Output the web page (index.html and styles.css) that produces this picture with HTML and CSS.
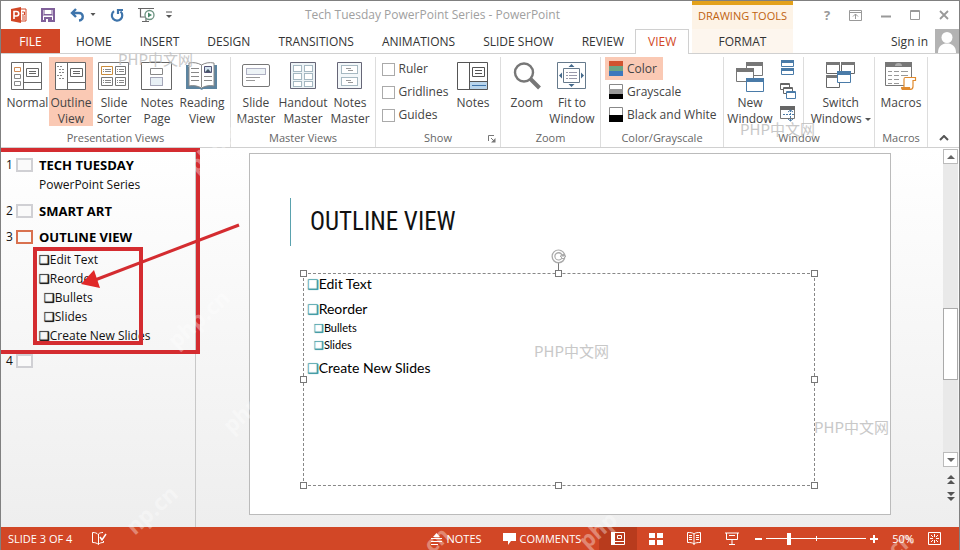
FILE: index.html
```html
<!DOCTYPE html>
<html lang="en">
<head>
<meta charset="utf-8">
<title>Tech Tuesday PowerPoint Series - PowerPoint</title>
<link rel="stylesheet" href="styles.css">
</head>
<body>
<div class="app">
  <header class="titlebar">
    <div class="quick">
      <svg class="logo" width="16" height="16" viewBox="0 0 16 16"><path d="M9 2h6v12H9z" fill="#fff" stroke="#d24726"/><path d="M0 2l10-2v16L0 14z" fill="#d24726"/><path d="M3 12V4.500h2.500a2 2 0 0 1 0 4.500H3" fill="none" stroke="#fff" stroke-width="1.600"/><path d="M11 5h2.500v3H11M11 10h3M11 12h3" fill="none" stroke="#d24726"/></svg>
      <button class="plain save" aria-label="Save"><svg width="14" height="14" viewBox="0 0 14 14"><path d="M1 1h12v12H1z" fill="#fff" stroke="#80609a" stroke-width="2"/><path d="M3 1v5.500h8V1M1 7h12" fill="none" stroke="#80609a"/><path d="M3 9h8v5H3z" fill="#80609a"/><path d="M5 11h2v3H5z" fill="#fff"/></svg></button>
      <button class="plain undo" aria-label="Undo"><svg width="26" height="14" viewBox="0 0 26 14"><path d="M2 5h7c5 0 5 7 0 7.500M6 1L2 5l4 4" fill="none" stroke="#3e74ab" stroke-width="2.400"/><path d="M20.500 5h5L23 8z" fill="#555"/></svg></button>
      <button class="plain redo" aria-label="Repeat"><svg width="14" height="14" viewBox="0 0 14 14"><path d="M4 3.200A5.200 5.200 0 1 0 10.500 3.500M8 6V2h5" fill="none" stroke="#3e74ab" stroke-width="2.200"/></svg></button>
      <button class="plain start" aria-label="Start from beginning"><svg width="18" height="16" viewBox="0 0 18 16"><path d="M0 1.500h16M2.500 2v8H7M8 10v4M4 14.500h7" fill="none" stroke="#666" stroke-width="1.200"/><circle cx="11.500" cy="8" r="4.500" fill="#fff" stroke="#6d9482" stroke-width="1.300"/><path d="M10 5.500v5l4-2.500z" fill="#4a8a6b"/></svg></button>
      <button class="plain more" aria-label="Customize"><svg width="6" height="8" viewBox="0 0 6 8"><path d="M0 1h6" stroke="#555"/><path d="M0 4h6L3 7z" fill="#555"/></svg></button>
    </div>
    <h1 class="doc">Tech Tuesday PowerPoint Series - PowerPoint</h1>
    <div class="tools">DRAWING TOOLS</div>
    <div class="winbtns">
      <button class="plain help" aria-label="Help">?</button>
      <button class="plain" aria-label="Ribbon display"><svg width="13" height="11" viewBox="0 0 13 11"><path d="M.5.5h12v10H.5zM.5 2.500h12M6.500 9V4M4 6.500L6.500 4 9 6.500" fill="none" stroke="#999"/></svg></button>
      <button class="plain" aria-label="Minimize"><svg width="10" height="10" viewBox="0 0 10 10"><path d="M0 6.500h10" stroke="#999" stroke-width="2"/></svg></button>
      <button class="plain" aria-label="Maximize"><svg width="10" height="10" viewBox="0 0 10 10"><path d="M.5.5h9v9h-9zM0 1.500h10" fill="none" stroke="#999"/></svg></button>
      <button class="plain" aria-label="Close"><svg width="10" height="10" viewBox="0 0 10 10"><path d="M1 1l8 8M9 1L1 9" stroke="#999" stroke-width="1.800"/></svg></button>
    </div>
  </header>

  <nav class="tabs">
    <a class="tab file" href="#">FILE</a>
    <a class="tab" href="#">HOME</a>
    <a class="tab" href="#">INSERT</a>
    <a class="tab" href="#">DESIGN</a>
    <a class="tab" href="#">TRANSITIONS</a>
    <a class="tab" href="#">ANIMATIONS</a>
    <a class="tab" href="#">SLIDE SHOW</a>
    <a class="tab" href="#">REVIEW</a>
    <a class="tab active" href="#">VIEW</a>
    <a class="tab format" href="#">FORMAT</a>
    <a class="signin" href="#">Sign in</a>
    <svg class="avatar" width="24" height="24" viewBox="0 0 24 24"><path d="M0 0h24v24H0z" fill="#b3b3b3"/><circle cx="12" cy="8.500" r="5.500" fill="#fff"/><path d="M3 24c0-7 4-9.500 9-9.500s9 2.500 9 9.500z" fill="#fff"/></svg>
  </nav>

  <section class="ribbon">
    <div class="group">
      <div class="row">
        <button class="big"><svg width="32" height="28" viewBox="0 0 32 28"><path d="M.5.5h30v27H.5zM12.500.5v27M12.500 20.500h18" fill="#fff" stroke="#666"/><path d="M15.500 6.500h12v8h-12zM18 9.500h7M18 11.500h7" fill="none" stroke="#666"/><path d="M3.500 5.500h6v4h-6z" fill="none" stroke="#cf8a55"/><path d="M3.500 12.500h6v4h-6zM3.500 19.500h6v4h-6z" fill="none" stroke="#888"/></svg>Normal</button>
        <button class="big on"><svg width="32" height="28" viewBox="0 0 32 28"><path d="M.5.5h30v27H.5zM12.500.5v27M12.500 20.500h18" fill="#fff" stroke="#666"/><path d="M15.500 6.500h12v8h-12zM18 9.500h7M18 11.500h7" fill="none" stroke="#666"/><path d="M2 4.500h6M4 7.500h6M4 10.500h6M2 13.500h6M4 16.500h6" stroke="#888" stroke-dasharray="2 1"/></svg>Outline<br>View</button>
        <button class="big"><svg width="32" height="28" viewBox="0 0 32 28"><path d="M.5.5h30v27H.5z" fill="#fff" stroke="#777"/><path d="M3.500 4.500h11v8h-11z" fill="none" stroke="#c98c3c"/><path d="M17.500 4.500h10v8h-10zM3.500 15.500h11v8h-11zM17.500 15.500h10v8h-10z" fill="none" stroke="#777"/><path d="M5 7.500h8M5 9.500h8M19 7.500h7M19 9.500h7M5 18.500h8M5 20.500h8M19 18.500h7M19 20.500h7" stroke="#888" stroke-dasharray="1 1 5 0"/></svg>Slide<br>Sorter</button>
        <button class="big"><svg width="32" height="28" viewBox="0 0 32 28"><path d="M.5.5h30v27H.5z" fill="#fff" stroke="#666"/><path d="M9.500 6.500h12v6h-12z" fill="none" stroke="#888"/><path d="M9.500 15.500h12v8h-12z" fill="#e8f0f5" stroke="#557" stroke-dasharray="1 1"/></svg>Notes<br>Page</button>
        <button class="big"><svg width="32" height="28" viewBox="0 0 32 28"><path d="M0 3h31v24H17l-1 1-2-1H0z" fill="#5c84a0"/><path d="M3 1c5-1 9 0 12.500 2C19 1 23 0 28 1v23c-5-1-9 0-12.500 2C12 24 8 23 3 24z" fill="#fff" stroke="#888"/><path d="M15.500 3v22M5 6.500h8M5 10.500h8M5 14.500h8M5 18.500h8M18 14.500h8M18 18.500h8" stroke="#888" fill="none"/><path d="M18.500 4.500h7v6h-7z" fill="#d5e5f0" stroke="#557"/><path d="M19 10l3-3 3 3z" fill="#456"/></svg>Reading<br>View</button>
      </div>
      <h2>Presentation Views</h2>
    </div>
    <div class="group">
      <div class="row">
        <button class="big"><svg width="28" height="28" viewBox="0 0 28 28"><rect x=".5" y="2.500" width="27" height="22" rx="1.500" fill="#fff" stroke="#777"/><path d="M4.500 6.500h19v6h-19z" fill="#edf3f6" stroke="#668" stroke-dasharray="1 1"/><path d="M4 15.500h14M4 18.500h9" stroke="#999"/></svg>Slide<br>Master</button>
        <button class="big"><svg width="28" height="28" viewBox="0 0 28 28"><path d="M1.500.5h25v26h-25z" fill="#edf3f6" stroke="#667"/><path d="M4.500 3.500h8v6h-8zM15.500 3.500h8v6h-8zM4.500 11.500h8v6h-8zM15.500 11.500h8v6h-8zM4.500 19.500h8v5h-8zM15.500 19.500h8v5h-8z" fill="#fff" stroke="#578" stroke-dasharray="1 1"/></svg>Handout<br>Master</button>
        <button class="big"><svg width="28" height="28" viewBox="0 0 28 28"><path d="M1.500.5h24v26h-24z" fill="#f3f7f9" stroke="#667"/><path d="M5.500 3.500h16v8h-16zM5.500 15.500h16v8h-16z" fill="#fff" stroke="#578" stroke-dasharray="1 1"/><path d="M10 6.500h5M12 8.500h5M10 18.500h5M12 20.500h5" stroke="#999"/></svg>Notes<br>Master</button>
      </div>
      <h2>Master Views</h2>
    </div>
    <div class="group">
      <div class="row">
        <div class="checks">
          <label><input type="checkbox">Ruler</label>
          <label><input type="checkbox">Gridlines</label>
          <label><input type="checkbox">Guides</label>
        </div>
        <button class="big"><svg width="32" height="28" viewBox="0 0 32 28"><path d="M.5.5h30v27H.5z" fill="#fff" stroke="#555"/><path d="M13 19h17v8H13z" fill="#b9d5ec"/><path d="M12.500.5v27M12.500 19.500h18M15.500 5.500h12v9h-12zM18 8.500h7M18 11.500h7" fill="none" stroke="#555"/><path d="M15 23.500h14" stroke="#3e74ab"/></svg>Notes</button>
      </div>
      <h2>Show</h2>
      <button class="plain launcher" aria-label="Grid settings"><svg width="8" height="8" viewBox="0 0 8 8"><path d="M.5 6V.5H6M3 3l3 3" fill="none" stroke="#777"/><path d="M7.500 3v4.500H3z" fill="#777"/></svg></button>
    </div>
    <div class="group">
      <div class="row">
        <button class="big"><svg width="28" height="28" viewBox="0 0 28 28"><circle cx="11" cy="10.500" r="9" fill="#fff" stroke="#777" stroke-width="2.400"/><path d="M17.500 17l9 9" stroke="#777" stroke-width="4"/></svg>Zoom</button>
        <button class="big"><svg width="30" height="28" viewBox="0 0 30 28"><path d="M.5.5h28v26H.5z" fill="#fff" stroke="#667a8c"/><path d="M6.500 6.500h16v14h-16z" fill="none" stroke="#667a8c"/><path d="M9 10.500h2M12 10.500h8M9 13.500h2M12 13.500h8M9 16.500h2M12 16.500h8" stroke="#99a"/><path d="M14.500 2l3 3h-6zM14.500 25l3-3h-6zM2 13.500l3-3v6zM27 13.500l-3-3v6z" fill="#456a8c"/></svg>Fit to<br>Window</button>
      </div>
      <h2>Zoom</h2>
    </div>
    <div class="group">
      <div class="modes">
        <button class="mode on"><svg width="14" height="15" viewBox="0 0 14 15"><path d="M0 0h14v5H0z" fill="#d0532f"/><path d="M0 5h14v5H0z" fill="#6aa584"/><path d="M0 10h14v5H0z" fill="#3c78bd"/></svg>Color</button>
        <button class="mode"><svg width="14" height="15" viewBox="0 0 14 15"><path d="M.5.5h13v14H.5z" fill="#fff" stroke="#888"/><path d="M0 5h14v5H0z" fill="#999"/><path d="M0 10h14v5H0z" fill="#000"/></svg>Grayscale</button>
        <button class="mode"><svg width="14" height="15" viewBox="0 0 14 15"><path d="M.5.5h13v14H.5z" fill="#fff" stroke="#888"/><path d="M0 8h14v7H0z" fill="#000"/></svg>Black and White</button>
      </div>
      <h2>Color/Grayscale</h2>
    </div>
    <div class="group">
      <div class="row">
        <button class="big"><svg width="28" height="32" viewBox="0 0 28 32"><path d="M10.500 1.500h16v12h-16z" fill="#fff" stroke="#777"/><path d="M10 0h17v4H10z" fill="#777"/><path d="M.5 7.500h17v12H.5z" fill="#fff" stroke="#777"/><path d="M0 6h18v4H0z" fill="#777"/><path d="M10.500 17.500h17v12h-17z" fill="#fff" stroke="#4a7ba8"/><path d="M10 16h18v4H10z" fill="#4a7ba8"/></svg>New<br>Window</button>
        <div class="stack">
          <button class="plain" aria-label="Arrange all"><svg width="16" height="16" viewBox="0 0 16 16"><path d="M1.500 1.500h12v5h-12zM1.500 8.500h12v6h-12z" fill="#fff" stroke="#4a7ba8"/><path d="M1 0h13v3H1zM1 8h13v3H1z" fill="#4a7ba8"/></svg></button>
          <button class="plain" aria-label="Cascade"><svg width="16" height="16" viewBox="0 0 16 16"><path d="M.5.5h9v6h-9zM0 1.500h10" fill="#fff" stroke="#666"/><path d="M3.500 4.500h9v6h-9zM3 5.500h10" fill="#fff" stroke="#666"/><path d="M6.500 8.500h9v7h-9zM6 9.500h10" fill="#fff" stroke="#4a7ba8"/></svg></button>
          <button class="plain" aria-label="Move split"><svg width="16" height="16" viewBox="0 0 16 16"><path d="M.5 1.500h14v11H.5z" fill="#fff" stroke="#777"/><path d="M0 0h15v4H0z" fill="#666"/><path d="M3 8.500h12M10.500 4v11" stroke="#4a7ba8" stroke-dasharray="2 1"/><path d="M8 6l2.500-2L13 6M8 13l2.500 2 2.500-2" fill="none" stroke="#4a7ba8"/></svg></button>
        </div>
        <button class="big switch"><svg width="30" height="28" viewBox="0 0 30 28"><path d="M.5 1.500h13v10H.5zM15.500 1.500h13v10h-13zM.5 14.500h13v11H.5z" fill="#fff" stroke="#666"/><path d="M0 0h14v3H0zM15 0h14v3H15zM0 13h14v3H0z" fill="#777"/><path d="M11.500 10.500h13v10h-13z" fill="#fff" stroke="#4a7ba8"/><path d="M11 9h14v4H11z" fill="#4a7ba8"/></svg>Switch<br><span>Windows<i class="caret"></i></span></button>
      </div>
      <h2>Window</h2>
    </div>
    <div class="group">
      <div class="row">
        <button class="big"><svg width="32" height="29" viewBox="0 0 32 29"><path d="M.5.5h26v23H.5z" fill="#fff" stroke="#777"/><path d="M0 0h27v5H0z" fill="#777"/><path d="M10 4a3.500 3 0 0 1 7 0z" fill="#aaa"/><path d="M3 9.500h4M9 9.500h5M16 9.500h7M3 13.500h4M9 13.500h5M16 13.500h7M3 17.500h4M9 17.500h5M3 21.500h4M9 21.500h5" stroke="#999"/><path d="M20 15.500h10.500v3H28v6c0 2-1 3-3 3h-8c2 0 2-2 2-3v-7c0-1 0-2 1-2z" fill="#fff" stroke="#e08a2e" stroke-width="1.200"/><path d="M16 25h9c0 2 1 3 2 3H18c-2 0-2-2-2-3z" fill="#e08a2e"/></svg>Macros</button>
      </div>
      <h2>Macros</h2>
    </div>
    <button class="plain collapse" aria-label="Collapse ribbon"><svg width="10" height="6" viewBox="0 0 10 6"><path d="M1 5l4-4 4 4" fill="none" stroke="#555" stroke-width="2"/></svg></button>
  </section>

  <main class="work">
    <ol class="outline">
      <li><b class="num">1</b><i class="thumb"></i><div><h3>TECH TUESDAY</h3><p>PowerPoint Series</p></div></li>
      <li><b class="num">2</b><i class="thumb"></i><div><h3>SMART ART</h3></div></li>
      <li class="current"><b class="num">3</b><i class="thumb"></i><div><h3>OUTLINE VIEW</h3>
        <ul><li>Edit Text</li><li>Reorder</li><li class="sub">Bullets</li><li class="sub">Slides</li><li>Create New Slides</li></ul></div></li>
      <li><b class="num">4</b><i class="thumb"></i><div><h3></h3></div></li>
    </ol>
    <div class="stage">
      <article class="slide">
        <h2 class="slidetitle">OUTLINE VIEW</h2>
        <div class="textbox">
          <ul><li>Edit Text</li><li>Reorder</li><li class="sub">Bullets</li><li class="sub">Slides</li><li>Create New Slides</li></ul>
          <svg class="rotate" width="16" height="25" viewBox="0 0 16 25"><path d="M7.500 14v11" stroke="#777"/><circle cx="7.500" cy="7.500" r="5" fill="none" stroke="#aaa" stroke-width="4"/><path d="M12 9.500A5 5 0 1 1 12 5" fill="none" stroke="#fff" stroke-width="1.500"/><path d="M9 7h6l-3 3z" fill="#fff" stroke="#aaa"/></svg>
          <i class="handle t l"></i><i class="handle t c"></i><i class="handle t r"></i>
          <i class="handle m l"></i><i class="handle m r"></i>
          <i class="handle b l"></i><i class="handle b c"></i><i class="handle b r"></i>
        </div>
      </article>
    </div>
    <div class="scroll">
      <button class="arrow" aria-label="Scroll up"><svg width="8" height="4" viewBox="0 0 8 4"><path d="M0 4l4-4 4 4z" fill="#666"/></svg></button>
      <div class="track"><div class="grip"></div></div>
      <button class="arrow" aria-label="Scroll down"><svg width="8" height="4" viewBox="0 0 8 4"><path d="M0 0h8L4 4z" fill="#666"/></svg></button>
      <button class="plain jump" aria-label="Previous slide"><svg width="8" height="9" viewBox="0 0 8 9"><path d="M0 4l4-4 4 4zM0 9l4-4 4 4z" fill="#555"/></svg></button>
      <button class="plain jump" aria-label="Next slide"><svg width="8" height="9" viewBox="0 0 8 9"><path d="M0 0h8L4 4zM0 5h8L4 9z" fill="#555"/></svg></button>
    </div>
  </main>

  <footer class="status">
    <span>SLIDE 3 OF 4</span>
    <button class="plain spell" aria-label="Spelling"><svg width="15" height="13" viewBox="0 0 15 13"><path d="M6 2.500C5 1 3 .5.500.5v10c2.500 0 4.500.5 6 2 1-1.500 3-2 5-2V9M6.500 2v10.500M6.500 2C7.500 1 9 .5 11 .5" fill="none" stroke="#fff"/><path d="M8 5l2 3 4-6" fill="none" stroke="#fff" stroke-width="1.500"/></svg></button>
    <button class="plain notes"><svg width="11" height="12" viewBox="0 0 11 12"><path d="M5.500 0L9 4H2z" fill="#fff"/><path d="M0 5.500h11M0 8.500h11M0 11.500h7" stroke="#fff"/></svg>NOTES</button>
    <button class="plain comments"><svg width="13" height="12" viewBox="0 0 13 12"><path d="M0 0h13v8H8l-3 4V8H0z" fill="#fff"/></svg>COMMENTS</button>
    <div class="views">
      <button class="plain view on" aria-label="Normal view"><svg width="14" height="13" viewBox="0 0 14 13"><path d="M.5.5h13v12H.5zM3.500.5v12M3.500 9.500h10M6.500 3.500h4v3h-4z" fill="none" stroke="#fff"/><path d="M0 0h3v13H0z" fill="#fff"/></svg></button>
      <button class="plain view" aria-label="Slide sorter"><svg width="14" height="12" viewBox="0 0 14 12"><path d="M0 0h6v5H0zM8 0h6v5H8zM0 7h6v5H0zM8 7h6v5H8z" fill="#fff"/></svg></button>
      <button class="plain view" aria-label="Reading view"><svg width="14" height="13" viewBox="0 0 14 13"><path d="M7 2C5.500.5 3 .5.500.5v10c2.500 0 5 0 6.500 1.500C8.500 10.500 11 10.500 13.500 10.500V.5C11 .5 8.500.5 7 2zv11M2 3.500h3M2 5.500h3M2 7.500h3M9 3.500h3M9 5.500h3M9 7.500h3" fill="none" stroke="#fff"/></svg></button>
      <button class="plain view" aria-label="Slide show"><svg width="14" height="13" viewBox="0 0 14 13"><path d="M0 1h14M1.500 1v6.500h11V1M7 8v4M4 12.500h6M4 3.500h6" fill="none" stroke="#fff"/></svg></button>
    </div>
    <div class="zoom">
      <button class="plain" aria-label="Zoom out"><svg width="7" height="8" viewBox="0 0 7 8"><path d="M0 4h7" stroke="#fff" stroke-width="2"/></svg></button>
      <input type="range" min="0" max="100" value="22" aria-label="Zoom">
      <button class="plain" aria-label="Zoom in"><svg width="8" height="8" viewBox="0 0 8 8"><path d="M0 4h8M4 0v8" stroke="#fff" stroke-width="2"/></svg></button>
    </div>
    <span class="pct">50%</span>
    <button class="plain fit" aria-label="Fit slide"><svg width="13" height="13" viewBox="0 0 13 13"><path d="M.5.5h12v12H.5zM6.500 2v3M6.500 8v3M2 6.500h3M8 6.500h3M3 3l2 2M10 3L8 5M3 10l2-2M10 10L8 8" fill="none" stroke="#fff"/></svg></button>
  </footer>

  <svg class="marks" width="242" height="212" viewBox="0 0 242 212"><path d="M-2 5h199v202H-2M34 104h106v94H34z" fill="none" stroke="#d42c30" stroke-width="4"/><path d="M238 80L94 135" stroke="#d42c30" stroke-width="3"/><path d="M80 139l13-14 6 18z" fill="#e02828"/></svg>
  <span class="wm w1">PHP中文网</span><span class="wm w2">PHP中文网</span><span class="wm w3">PHP中文网</span><span class="wm w4">PHP中文网</span>
  <span class="diag d1">php.cn</span><span class="diag d2">php.cn</span><span class="diag d3">np.cn</span><span class="diag d4">php</span><span class="diag d5">php.cn</span><span class="diag d6">cn</span><span class="diag d7">cn</span>
</div>
</body>
</html>
```
FILE: styles.css
```css
* { box-sizing: border-box; }
body { margin: 0; font: 12px/16px "Open Sans", "Noto Sans", sans-serif; color: #444; }
h1, h2, h3, p, ul, ol { margin: 0; padding: 0; font: inherit; list-style: none; }
a { color: inherit; text-decoration: none; }
svg { display: block; flex: none; }
button { font: inherit; color: inherit; background: none; border: 0; padding: 0; margin: 0; }
.plain { display: flex; align-items: center; }

.app { position: relative; display: flex; flex-direction: column; min-height: 100vh; overflow: hidden; border: solid #808080; border-width: 1px 1px 0; background: #fff; }

.titlebar { display: flex; align-items: stretch; height: 28px; }
.quick { display: flex; align-items: center; width: 184px; padding-left: 10px; }
.save { margin-left: 14px; }
.undo { margin-left: 15px; }
.redo { margin-left: 14px; }
.start { margin-left: 14px; }
.more { margin-left: 10px; }
.doc { flex: 1; align-self: center; padding-right: 12px; text-align: center; color: #a0a0a0; }
.tools { width: 101px; border-top: 4px solid #e3a11b; background: #fdf3e6; color: #c0620e; font-size: 11px; line-height: 22px; text-align: center; }
.winbtns { display: flex; align-items: center; justify-content: space-between; width: 166px; padding: 0 10px 0 31px; }
.help { font-weight: 700; font-size: 13px; color: #999; }

.tabs { display: flex; height: 25px; border-bottom: 1px solid #d0d0d0; line-height: 25px; white-space: nowrap; color: #333; }
.tab { flex: none; padding: 0 14px; }
.tab.file { width: 59px; margin-right: 2px; padding: 0; text-align: center; background: #d24726; color: #fff; }
.tab.active { height: 25px; margin-left: -3px; padding: 0 12px; border: solid #d0d0d0; border-width: 1px 1px 0; line-height: 24px; background: #fff; color: #d24726; }
.tab.format { width: 101px; margin-left: auto; padding: 0; text-align: center; background: #fdf6ee; }
.signin { flex: none; width: 142px; padding-right: 7px; text-align: right; }

.ribbon { display: grid; grid-template-columns: 230fr 145fr 125fr 100fr 123fr 151fr 53fr 31fr; height: 94px; padding-top: 3px; border-bottom: 1px solid #d0d0d0; }
.group { position: relative; display: flex; flex-direction: column; justify-content: space-between; border-right: 1px solid #ddd; padding-bottom: 1px; }
.group h2 { font-size: 11px; text-align: center; color: #666; }
.row { display: flex; justify-content: center; }
.big { display: flex; flex-direction: column; align-items: center; min-width: 43px; height: 69px; padding: 5px 1px 0; white-space: nowrap; text-align: center; }
.big svg { margin-bottom: 5px; }
.big svg[height="32"] { margin-bottom: 1px; }
.big svg[height="29"] { margin-bottom: 4px; }
.big.on, .mode.on { background: #fac9b4; }
.caret { display: inline-block; margin-left: 3px; border: solid transparent; border-width: 3px 3px 0; border-top-color: #555; vertical-align: middle; }
.checks { display: flex; flex-direction: column; gap: 7px; width: 70px; padding-top: 4px; }
.checks label { display: flex; align-items: center; gap: 4px; }
.checks input { appearance: none; flex: none; width: 13px; height: 13px; margin: 0; border: 1px solid #aaa; background: #fff; }
.launcher { position: absolute; right: 4px; bottom: 4px; }
.modes { display: flex; flex-direction: column; align-items: flex-start; padding-left: 4px; }
.mode { display: flex; align-items: center; gap: 4px; height: 23px; padding: 0 6px 0 4px; white-space: nowrap; }
.stack { display: flex; flex-direction: column; gap: 7px; padding: 3px 7px 0 6px; }
.switch { padding-left: 7px; border-left: 1px solid #ddd; }
.collapse { align-self: end; justify-self: center; padding-bottom: 6px; }

.work { flex: 1; display: flex; background: linear-gradient(#fff, #eee); }
.outline { width: 195px; padding-top: 7px; border-right: 1px solid #c8c8c8; color: #111; }
.outline > li { display: flex; align-items: flex-start; margin-bottom: 6px; }
.num { width: 15px; padding-left: 5px; font-weight: 400; line-height: 20px; }
.thumb { width: 17px; height: 14px; margin: 3px 6px 0 0; border: 2px solid #d0d0d4; background: #fafafa; }
.current .thumb { border-color: #d9714f; }
.outline h3 { font-size: 13px; font-weight: 700; line-height: 20px; color: #000; }
.outline p { line-height: 20px; }
.outline ul { padding-top: 3px; }
.outline ul li { line-height: 19px; white-space: nowrap; }
.outline ul li::before, .textbox li::before { content: "❑"; font-family: "DejaVu Sans", sans-serif; line-height: 1; text-shadow: 0 0 1px currentColor; }
.outline .sub { padding-left: 5px; }

.stage { flex: 1; display: flex; padding: 5px 52px 12px 53px; }
.slide { flex: 1; display: flex; flex-direction: column; padding: 44px 75px 28px 40px; border: 1px solid #bbb; background: #fff; }
.slidetitle { padding-left: 19px; border-left: 1px solid #5aa2ae; font: 25px/48px "Liberation Sans Narrow", "Roboto Condensed", "DejaVu Sans Condensed", sans-serif; color: #111; }
.textbox { position: relative; flex: 1; margin: 27px 0 0 13px; padding-left: 3px; border: 1px dashed #888; font: 14px/20px Lato, sans-serif; color: #000; }
.textbox li + li { margin-top: 5px; }
.textbox li::before { color: #3a98a2; font-size: 13px; }
.textbox li + .sub { margin: 0 0 0 7px; font-size: 11px; line-height: 17px; }
.textbox .sub::before { font-size: 11px; }
.rotate { position: absolute; left: calc(50% - 8px); top: -25px; }
.handle { position: absolute; width: 7px; height: 7px; border: 1px solid #777; background: #fff; }
.t { top: -4px; } .m { top: calc(50% - 4px); } .b { bottom: -4px; }
.l { left: -4px; } .c { left: calc(50% - 4px); } .r { right: -4px; }

.scroll { display: flex; flex-direction: column; align-items: center; width: 16px; padding: 1px 1px 26px 0; }
.arrow { display: flex; align-items: center; justify-content: center; width: 15px; height: 15px; border: 1px solid #bbb; background: #fff; }
.track { flex: 1; display: flex; flex-direction: column; width: 15px; background: #e9e9e9; }
.track::before { content: ""; flex: 146; }
.track::after { content: ""; flex: 73; }
.grip { flex: 71; border: 1px solid #aaa; background: #fff; }
.jump { margin-top: 8px; }

.status { display: flex; align-items: center; height: 23px; padding: 0 18px 0 7px; background: #d24726; color: #fff; font-size: 11px; }
.spell { margin: 0 auto 0 20px; }
.notes { gap: 5px; }
.comments { gap: 4px; margin: 0 18px 0 21px; }
.views { display: flex; align-self: stretch; }
.view { justify-content: center; width: 38px; }
.view.on { background: #b83b1d; }
.zoom { display: flex; align-items: center; gap: 4px; margin: 0 14px 0 4px; }
.zoom input { appearance: none; width: 100px; height: 14px; margin: 0; background: linear-gradient(#fff, #fff) 50% 50% / 1px 5px no-repeat, linear-gradient(#fff, #fff) 0 50% / 100% 1px no-repeat; }
.zoom input::-webkit-slider-thumb { appearance: none; width: 4px; height: 12px; background: #fff; }
.fit { margin-left: 14px; }

.marks { position: absolute; left: 0; top: 144px; pointer-events: none; }
.wm { position: absolute; font: 15px/20px "Noto Sans CJK SC", sans-serif; color: #bbb; opacity: .8; pointer-events: none; white-space: nowrap; }
.w1 { left: 117px; top: 48px; }
.w2 { left: 739px; top: 118px; }
.w3 { left: 533px; top: 340px; }
.w4 { left: 813px; top: 416px; }
.diag { position: absolute; font: 700 22px/24px "Noto Sans", sans-serif; color: #fff; opacity: .35; transform: rotate(-42deg); pointer-events: none; }
.d1 { left: 180px; top: 130px; }
.d2 { left: 160px; top: 305px; }
.d3 { left: 120px; top: 496px; }
.d4 { left: 575px; top: 516px; }
.d5 { left: 215px; top: 390px; }
.d6 { left: 422px; top: 526px; }
.d7 { left: 886px; top: 530px; }
```
